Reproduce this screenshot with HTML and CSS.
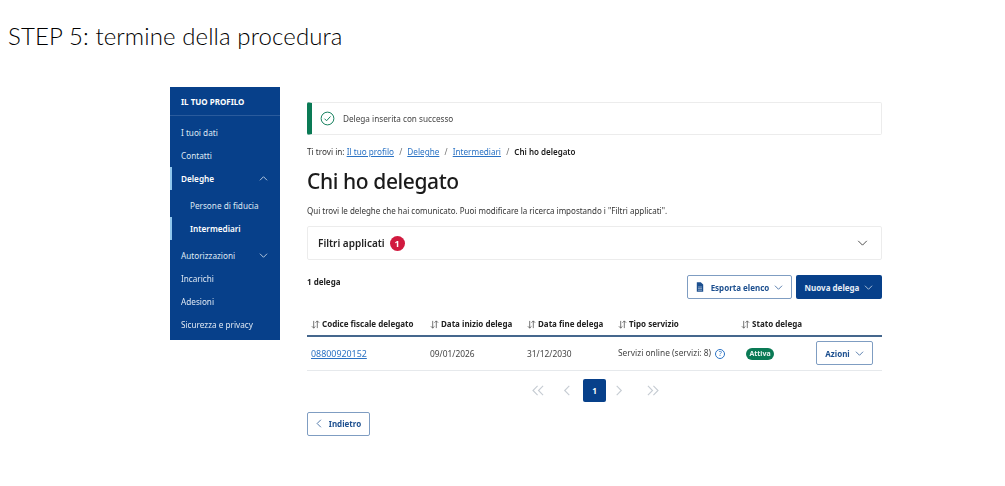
FILE: index.html
```html
<!DOCTYPE html>
<html lang="en">
<head>
    <meta charset="UTF-8">
    <title>STEP 5: termine della procedura</title>
    <link rel="stylesheet" href="styles.css">
</head>
<body>
    <h1 class="step-title">STEP 5: termine della procedura</h1>

    <div class="shot">
        <nav class="side">
            <div class="side-head">IL TUO PROFILO</div>
            <ul class="side-list">
                <li class="side-item">I tuoi dati</li>
                <li class="side-item">Contatti</li>
                <li class="side-item open">Deleghe
                    <svg class="chev" viewBox="0 0 12 7"><path d="M1 6l5-5 5 5"/></svg>
                </li>
                <li class="side-item sub">Persone di fiducia</li>
                <li class="side-item sub current">Intermediari</li>
                <li class="side-item after-sub">Autorizzazioni
                    <svg class="chev" viewBox="0 0 12 7"><path d="M1 1l5 5 5-5"/></svg>
                </li>
                <li class="side-item">Incarichi</li>
                <li class="side-item">Adesioni</li>
                <li class="side-item">Sicurezza e privacy</li>
            </ul>
        </nav>

        <main class="content">
            <div class="alert">
                <svg class="alert-icon" viewBox="0 0 16 16">
                    <circle cx="8" cy="8" r="6.8"/>
                    <path d="M4.8 8.2l2.2 2.2 4.2-4.6"/>
                </svg>
                Delega inserita con successo
            </div>

            <div class="crumbs">
                Ti trovi in: <a href="#">Il tuo profilo</a> <span class="sep">/</span>
                <a href="#">Deleghe</a> <span class="sep">/</span>
                <a href="#">Intermediari</a> <span class="sep">/</span>
                <b>Chi ho delegato</b>
            </div>

            <h2 class="page-title">Chi ho delegato</h2>
            <p class="intro">Qui trovi le deleghe che hai comunicato. Puoi modificare la ricerca impostando i "Filtri applicati".</p>

            <div class="filters">
                <span class="filters-label">Filtri applicati <span class="count">1</span></span>
                <svg class="filters-chev" viewBox="0 0 12 7"><path d="M1 1l5 5 5-5"/></svg>
            </div>

            <div class="toolbar">
                <span class="total">1 delega</span>
                <div class="toolbar-btns">
                    <button class="btn btn-line">
                        <svg class="doc" viewBox="0 0 10 12"><path d="M1 0h5l3 3v9H1z"/><path class="doc-lines" d="M2.500 6h5M2.500 8h5M2.500 10h5"/></svg>
                        Esporta elenco
                        <svg class="btn-chev" viewBox="0 0 12 7"><path d="M1 1l5 5 5-5"/></svg>
                    </button>
                    <button class="btn btn-full">
                        Nuova delega
                        <svg class="btn-chev" viewBox="0 0 12 7"><path d="M1 1l5 5 5-5"/></svg>
                    </button>
                </div>
            </div>

            <table class="deleghe">
                <thead>
                    <tr>
                        <th class="col-cf"><svg class="sort" viewBox="0 0 10 10"><path d="M3 1v8M1 7l2 2 2-2M7 9V1M5 3l2-2 2 2"/></svg>Codice fiscale delegato</th>
                        <th class="col-start"><svg class="sort" viewBox="0 0 10 10"><path d="M3 1v8M1 7l2 2 2-2M7 9V1M5 3l2-2 2 2"/></svg>Data inizio delega</th>
                        <th class="col-end"><svg class="sort" viewBox="0 0 10 10"><path d="M3 1v8M1 7l2 2 2-2M7 9V1M5 3l2-2 2 2"/></svg>Data fine delega</th>
                        <th class="col-type"><svg class="sort" viewBox="0 0 10 10"><path d="M3 1v8M1 7l2 2 2-2M7 9V1M5 3l2-2 2 2"/></svg>Tipo servizio</th>
                        <th class="col-state"><svg class="sort" viewBox="0 0 10 10"><path d="M3 1v8M1 7l2 2 2-2M7 9V1M5 3l2-2 2 2"/></svg>Stato delega</th>
                        <th></th>
                    </tr>
                </thead>
                <tbody>
                    <tr>
                        <td><a href="#">08800920152</a></td>
                        <td>09/01/2026</td>
                        <td>31/12/2030</td>
                        <td>Servizi online (servizi: 8) <span class="help">?</span></td>
                        <td><span class="pill">Attiva</span></td>
                        <td>
                            <button class="btn btn-line btn-small">
                                Azioni
                                <svg class="btn-chev" viewBox="0 0 12 7"><path d="M1 1l5 5 5-5"/></svg>
                            </button>
                        </td>
                    </tr>
                </tbody>
            </table>

            <div class="pager">
                <svg class="pg pg-double pg-first" viewBox="0 0 14 12"><path d="M6 1L1 6l5 5M12 1L7 6l5 5"/></svg>
                <svg class="pg pg-prev" viewBox="0 0 8 12"><path d="M6.500 1L1.500 6l5 5"/></svg>
                <span class="pg-current">1</span>
                <svg class="pg pg-next" viewBox="0 0 8 12"><path d="M1.500 1l5 5-5 5"/></svg>
                <svg class="pg pg-double pg-last" viewBox="0 0 14 12"><path d="M2 1l5 5-5 5M8 1l5 5-5 5"/></svg>
            </div>

            <button class="btn btn-line btn-back">
                <svg class="back-chev" viewBox="0 0 8 12"><path d="M6.500 1L1.500 6l5 5"/></svg>
                Indietro
            </button>
        </main>
    </div>
</body>
</html>
```

FILE: styles.css
```css
*{
    padding: 0;
    margin: 0;
    box-sizing: border-box;
}
body{
    background: #fff;
    color: #1a1a1a;
    font-family: "Noto Sans", sans-serif;
    overflow: hidden;
}
.step-title{
    font-family: Lato, sans-serif;
    font-weight: 300;
    font-size: 24px;
    line-height: 30px;
    letter-spacing: 0.1px;
    color: #000;
    padding: 21px 0 0 8px;
}
.shot{
    display: flex;
    align-items: flex-start;
    gap: 27px;
    padding: 36px 0 0 170px;
    filter: blur(0.45px);
}

/* sidebar */
.side{
    width: 110px;
    height: 253px;
    background: #07408a;
    color: #dfe8f3;
    font-size: 8.2px;
    flex-shrink: 0;
}
.side-head{
    height: 29px;
    line-height: 30px;
    padding-left: 11px;
    font-size: 8px;
    font-weight: 700;
    color: #fff;
    border-bottom: 1px solid #2a5b9c;
}
.side-list{
    list-style: none;
    padding-top: 5px;
}
.side-item{
    display: flex;
    align-items: center;
    justify-content: space-between;
    height: 23px;
    padding: 0 12px 0 11px;
}
.side-item.open{
    font-weight: 600;
    color: #fff;
    box-shadow: inset 2px 0 0 #8fc7ee;
}
.side-item.sub{
    padding-left: 20px;
}
.side-item.open + .sub{
    margin-top: 4px;
}
.side-item.current{
    font-weight: 600;
    color: #fff;
    box-shadow: inset 2px 0 0 #8fc7ee;
}
.side-item.after-sub{
    margin-top: 4px;
}
.chev{
    width: 9px;
    height: 5px;
    fill: none;
    stroke: #dfe8f3;
    stroke-width: 1.1;
}

/* main column */
.content{
    width: 575px;
    font-size: 8.2px;
    color: #333;
}
.alert{
    display: flex;
    align-items: center;
    gap: 8px;
    height: 33px;
    padding-left: 8px;
    border: 1px solid #ececec;
    border-left: 5px solid #0a7a55;
    border-radius: 2px;
    margin-top: 15px;
    color: #444;
}
.alert-icon{
    width: 15px;
    height: 15px;
    fill: none;
    stroke: #0a7a55;
    stroke-width: 1;
}
.crumbs{
    margin-top: 10px;
    line-height: 14px;
}
.crumbs a,
.deleghe a{
    color: #2a72c4;
}
.crumbs .sep{
    color: #777;
    margin: 0 3px;
}
.crumbs b{
    color: #1a1a1a;
    font-size: 8px;
    font-weight: 600;
}
.page-title{
    font-size: 21px;
    font-weight: 500;
    letter-spacing: -0.4px;
    line-height: 30px;
    color: #1a1a1a;
    margin-top: 7px;
}
.intro{
    margin-top: 8px;
    font-size: 8px;
    line-height: 14px;
}
.filters{
    display: flex;
    align-items: center;
    justify-content: space-between;
    height: 34px;
    padding: 0 13px 0 10px;
    margin-top: 8px;
    border: 1px solid #ececec;
    border-radius: 2px;
}
.filters-label{
    display: flex;
    align-items: center;
    gap: 5px;
    font-size: 10px;
    font-weight: 600;
    color: #222;
}
.count{
    width: 15px;
    height: 15px;
    border-radius: 50%;
    background: #d11a3f;
    color: #fff;
    font-size: 9px;
    font-weight: 700;
    line-height: 15px;
    text-align: center;
}
.filters-chev{
    width: 11px;
    height: 6px;
    fill: none;
    stroke: #333;
    stroke-width: 1;
}
.toolbar{
    display: flex;
    justify-content: space-between;
    align-items: flex-start;
    margin-top: 15px;
}
.total{
    font-size: 8px;
    font-weight: 700;
    color: #222;
    line-height: 14px;
}
.toolbar-btns{
    display: flex;
    gap: 4px;
}
.btn{
    display: inline-flex;
    align-items: center;
    justify-content: center;
    height: 24px;
    border-radius: 2px;
    font-family: inherit;
    font-size: 8px;
    font-weight: 700;
}
.btn-line{
    background: #fff;
    color: #1c4f8f;
    border: 1px solid #7f9dc2;
}
.btn-full{
    background: #07408a;
    color: #e8eff7;
    border: none;
}
.toolbar-btns .btn-line{
    width: 105px;
}
.toolbar-btns .btn-full{
    width: 86px;
}
.doc{
    width: 8px;
    height: 10px;
    fill: #1c4f8f;
    margin-right: 7px;
}
.doc-lines{
    fill: none;
    stroke: #fff;
    stroke-width: 0.6;
}
.btn-chev{
    width: 9px;
    height: 5px;
    fill: none;
    stroke: currentColor;
    stroke-width: 1;
    margin-left: 5px;
}

/* table */
.deleghe{
    width: 100%;
    border-collapse: collapse;
    table-layout: fixed;
    margin-top: 13px;
}
.deleghe th{
    height: 24px;
    padding-left: 4px;
    text-align: left;
    font-size: 8px;
    font-weight: 700;
    color: #222;
    border-bottom: 2px solid #45678d;
    white-space: nowrap;
}
.sort{
    width: 9px;
    height: 9px;
    margin-right: 2px;
    vertical-align: -1.500px;
    fill: none;
    stroke: #555;
    stroke-width: 0.9;
}
.col-cf{ width: 119px; }
.col-start{ width: 97px; }
.col-end{ width: 91px; }
.col-type{ width: 123px; }
.col-state{ width: 75px; }
.deleghe td{
    height: 34px;
    padding-left: 4px;
    border-bottom: 1px solid #e6e9ec;
    white-space: nowrap;
    font-size: 8.400px;
    color: #444;
}
.deleghe td a{
    font-size: 8.900px;
}
.help{
    display: inline-block;
    width: 10px;
    height: 10px;
    margin-left: 2px;
    border: 1px solid #2a72c4;
    border-radius: 50%;
    color: #2a72c4;
    font-size: 7px;
    line-height: 8px;
    text-align: center;
}
.pill{
    display: inline-block;
    width: 28px;
    margin-left: 5px;
    border-radius: 6px;
    background: #0a7a55;
    color: #e6f3ee;
    font-size: 7px;
    font-weight: 700;
    line-height: 12px;
    text-align: center;
}
.btn-small{
    width: 57px;
}
.pager{
    display: flex;
    align-items: center;
    padding-left: 225px;
    margin-top: 8px;
    height: 23px;
}
.pg{
    width: 8px;
    height: 11px;
    fill: none;
    stroke: #c6ccd3;
    stroke-width: 1.2;
}
.pg-double{
    width: 13px;
}
.pg-first{ margin-right: 18px; }
.pg-prev{ margin-right: 12px; }
.pg-next{ margin: 0 23px 0 9px; }
.pg-current{
    width: 23px;
    height: 23px;
    border-radius: 2px;
    background: #07408a;
    color: #fff;
    font-weight: 700;
    line-height: 23px;
    text-align: center;
}
.btn-back{
    width: 63px;
    margin-top: 10px;
}
.back-chev{
    width: 6px;
    height: 9px;
    fill: none;
    stroke: #1c4f8f;
    stroke-width: 1;
    margin-right: 7px;
}
```
